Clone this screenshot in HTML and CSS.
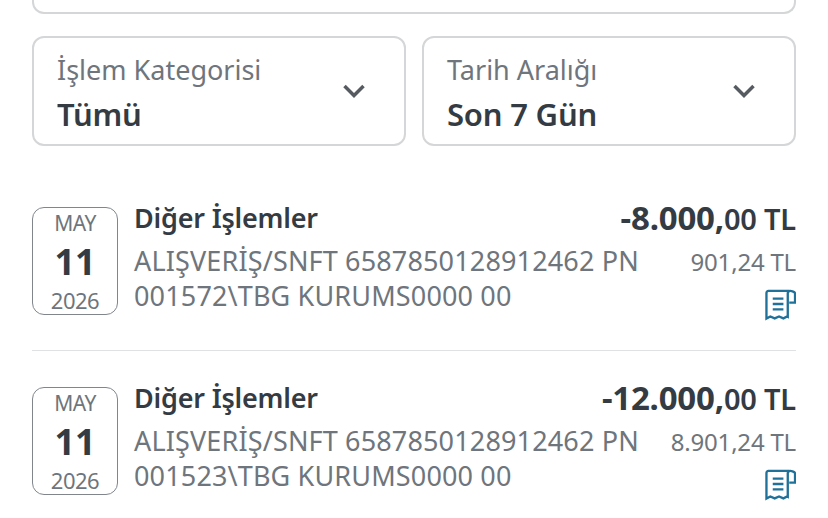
FILE: index.html
```html
<!DOCTYPE html>
<html lang="en">
  <head>
    <meta charset="UTF-8" />
    <meta name="viewport" content="width=device-width, initial-scale=1.0" />
    <title>Hesap Hareketleri</title>
    <link rel="stylesheet" href="styles.css">
  </head>
  <body>
    <svg class="iconDefs" width="0" height="0">
      <symbol id="receipt" viewBox="0 0 32 32">
        <path d="M25 1.500H3.500a2 2 0 0 0-2 2V30l4-2.200 4.500 2 4.500-2 4.500 2 4-2 .5.300V4c0-1.500 1-2.500 2.500-2.500S31 2.500 31 4v9.500h-6" />
        <path d="M8 9.500h11M8 15h11M8 20.500h11" />
      </symbol>
    </svg>

    <div class="mainDiv">
      <div class="topCard"></div>

      <div class="filterRow">
        <div class="selectBox">
          <div class="selectText">
            <span class="selectLabel">İşlem Kategorisi</span>
            <span class="selectValue">Tümü</span>
          </div>
          <svg class="chevron" viewBox="0 0 24 16"><path d="M2.500 3l9.500 9.500L21.500 3" /></svg>
        </div>
        <div class="selectBox">
          <div class="selectText">
            <span class="selectLabel">Tarih Aralığı</span>
            <span class="selectValue">Son 7 Gün</span>
          </div>
          <svg class="chevron" viewBox="0 0 24 16"><path d="M2.500 3l9.500 9.500L21.500 3" /></svg>
        </div>
      </div>

      <div class="txRow">
        <div class="dateBox">
          <span class="dateMonth">MAY</span>
          <span class="dateDay">11</span>
          <span class="dateYear">2026</span>
        </div>
        <div class="txMain">
          <div class="txTop">
            <div class="txTitle">Diğer İşlemler</div>
            <div class="txAmount"><b>-8.000,</b>00 TL</div>
          </div>
          <div class="txBottom">
            <div class="txDesc">ALIŞVERİŞ/SNFT 6587850128912462 PN<br />001572\TBG KURUMS0000 00</div>
            <div class="txSide">
              <div class="txBalance">901,24 TL</div>
              <svg class="receiptIcon"><use href="#receipt" /></svg>
            </div>
          </div>
        </div>
      </div>

      <div class="txRow">
        <div class="dateBox">
          <span class="dateMonth">MAY</span>
          <span class="dateDay">11</span>
          <span class="dateYear">2026</span>
        </div>
        <div class="txMain">
          <div class="txTop">
            <div class="txTitle">Diğer İşlemler</div>
            <div class="txAmount"><b>-12.000,</b>00 TL</div>
          </div>
          <div class="txBottom">
            <div class="txDesc">ALIŞVERİŞ/SNFT 6587850128912462 PN<br />001523\TBG KURUMS0000 00</div>
            <div class="txSide">
              <div class="txBalance">8.901,24 TL</div>
              <svg class="receiptIcon"><use href="#receipt" /></svg>
            </div>
          </div>
        </div>
      </div>
    </div>
  </body>
</html>
```

FILE: styles.css
```css
html,
body {
  margin: 0;
  height: 100%;
  overflow: hidden;
  background-color: #fff;
}
.iconDefs {
  display: block;
  height: 0;
}
.mainDiv {
  padding: 0 32px;
  font-family: "Noto Sans", sans-serif;
  color: #343b43;
}
.topCard {
  height: 12px;
  border: 2px solid #d4d6d8;
  border-top: none;
  border-radius: 0 0 12px 12px;
}
.filterRow {
  display: flex;
  gap: 16px;
  margin-top: 22px;
}
.selectBox {
  flex: 1;
  height: 110px;
  box-sizing: border-box;
  display: flex;
  align-items: center;
  justify-content: space-between;
  padding: 0 38px 0 23px;
  border: 2px solid #d4d6d8;
  border-radius: 12px;
}
.selectText {
  display: flex;
  flex-direction: column;
  gap: 11px;
  padding-top: 5px;
}
.selectLabel {
  font-size: 27px;
  line-height: 30px;
  color: #6e757c;
}
.selectValue {
  font-size: 31px;
  line-height: 36px;
  font-weight: 600;
  letter-spacing: -0.2px;
}
.chevron {
  width: 24px;
  height: 16px;
  fill: none;
  stroke: #555b61;
  stroke-width: 3.500;
}
.txRow {
  display: flex;
  margin-top: 61px;
  padding-bottom: 29px;
  border-bottom: 1px solid #dfe1e3;
}
.txRow + .txRow {
  margin-top: 36px;
  border-bottom: none;
}
.dateBox {
  width: 86px;
  height: 108px;
  box-sizing: border-box;
  flex: none;
  display: flex;
  flex-direction: column;
  align-items: center;
  border: 1px solid #80868c;
  border-radius: 12px;
  color: #6e757c;
}
.dateMonth {
  font-size: 21px;
  line-height: 30px;
  letter-spacing: -0.5px;
}
.dateDay {
  font-size: 36px;
  line-height: 47px;
  font-weight: 700;
  color: #343b43;
}
.dateYear {
  font-size: 22px;
  line-height: 30px;
  letter-spacing: -0.5px;
}
.txMain {
  flex: 1;
  margin-left: 16px;
  margin-top: -6px;
}
.txTop,
.txBottom {
  display: flex;
  justify-content: space-between;
}
.txBottom {
  margin-top: 8px;
}
.txTitle {
  font-size: 27px;
  line-height: 34px;
  font-weight: 600;
  letter-spacing: -0.2px;
}
.txDesc {
  font-size: 27px;
  line-height: 35px;
  letter-spacing: 0.15px;
  white-space: nowrap;
  color: #6e757c;
}
.txSide {
  display: flex;
  flex-direction: column;
  align-items: flex-end;
}
.txAmount {
  height: 34px;
  font-size: 29px;
  line-height: 34px;
  font-weight: 600;
  letter-spacing: -0.2px;
}
.txAmount b {
  font-size: 33px;
  font-weight: 700;
}
.txBalance {
  margin-top: 1px;
  font-size: 24px;
  line-height: 35px;
  letter-spacing: -0.2px;
  color: #6e757c;
}
.receiptIcon {
  width: 31px;
  height: 32px;
  margin-top: 10px;
  fill: none;
  stroke: #1f7199;
  stroke-width: 2.400;
}
```
